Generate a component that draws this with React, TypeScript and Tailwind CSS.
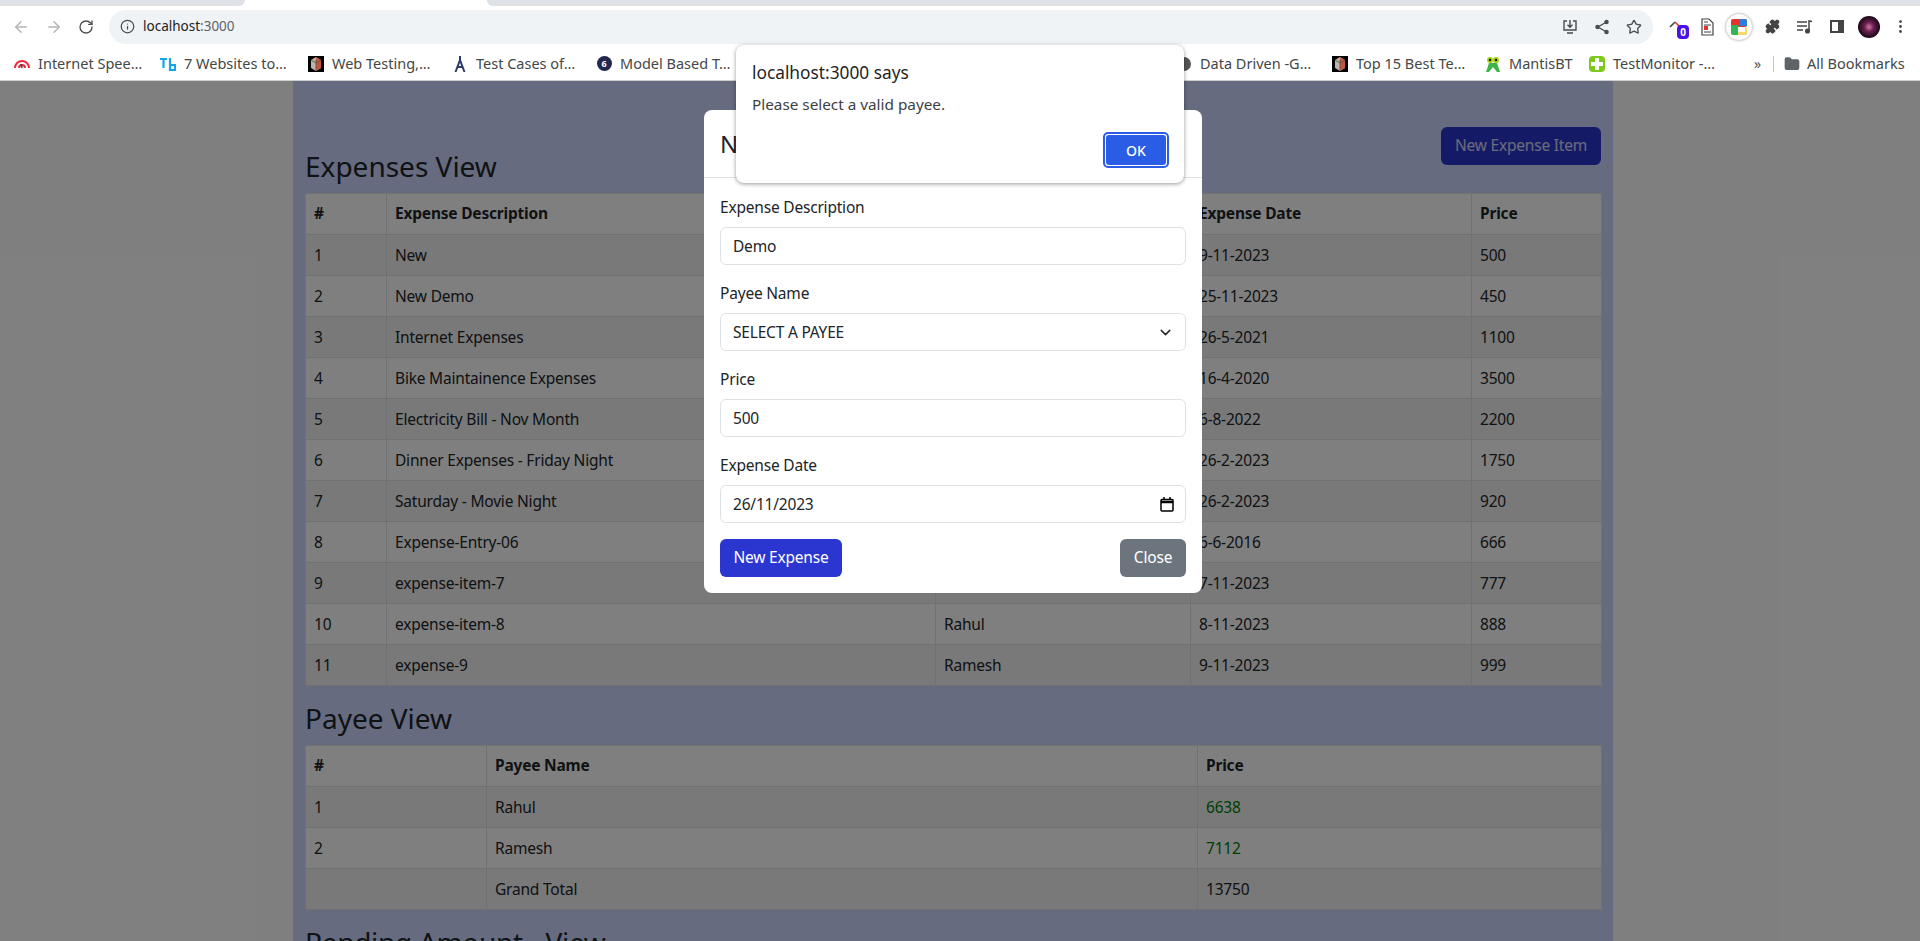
import React from 'react';
import { ArrowLeft, ArrowRight, RotateCw, Info, Star, Puzzle, MoreVertical, Folder, ChevronDown, X } from 'lucide-react';

const expenses = [
  ['1', 'New', '', '9-11-2023', '500'],
  ['2', 'New Demo', '', '25-11-2023', '450'],
  ['3', 'Internet Expenses', '', '26-5-2021', '1100'],
  ['4', 'Bike Maintainence Expenses', '', '16-4-2020', '3500'],
  ['5', 'Electricity Bill - Nov Month', '', '6-8-2022', '2200'],
  ['6', 'Dinner Expenses - Friday Night', '', '26-2-2023', '1750'],
  ['7', 'Saturday - Movie Night', '', '26-2-2023', '920'],
  ['8', 'Expense-Entry-06', '', '6-6-2016', '666'],
  ['9', 'expense-item-7', '', '7-11-2023', '777'],
  ['10', 'expense-item-8', 'Rahul', '8-11-2023', '888'],
  ['11', 'expense-9', 'Ramesh', '9-11-2023', '999'],
];

const cell = 'border border-[#dee2e6] px-2 h-[41px] text-left align-middle';
const bodyCell = `${cell} pt-[2px]`;

function Bookmark({ icon, label, width }: { icon: React.ReactNode; label: string; width: string }) {
  return (
    <div className={`flex items-center gap-2 shrink-0 ${width}`}>
      <span className="w-4 h-4 flex items-center justify-center shrink-0">{icon}</span>
      <span className="text-[14.5px] text-[#444746] whitespace-nowrap">{label}</span>
    </div>
  );
}

function Field({ label, children }: { label: string; children: React.ReactNode }) {
  return (
    <div className="mb-4">
      <div className="h-[24px] leading-[24px] mb-2 text-[#212529]">{label}</div>
      {children}
    </div>
  );
}

const inputBox = 'h-[38px] border border-[#dee2e6] rounded-md flex items-center justify-between px-3 pt-px text-[#212529]';

const gridIcon = (
  <svg width="16" height="16" viewBox="0 0 16 16">
    <rect width="16" height="16" fill="#000" />
    <path d="M3 4l5-3 5 3v8l-5 3-5-3z" fill="#b9b4ad" />
    <path d="M8 1l5 3v8l-5 3z" fill="#c4553e" />
    <path d="M8 4v11M3 4l5 3 5-3" stroke="#5b4a40" strokeWidth="0.8" fill="none" />
  </svg>
);

export default function App() {
  return (
    <div className="relative h-[941px] w-[1920px] overflow-hidden bg-white font-['Noto_Sans',sans-serif]">
      {/* browser chrome */}
      <div className="h-[6px] flex bg-white">
        <div className="w-[245px] rounded-br-lg bg-[#dee1e6]" />
        <div className="w-[242px]" />
        <div className="flex-1 rounded-bl-lg bg-[#dee1e6]" />
      </div>
      <div className="h-[41px] flex items-center pl-[12px] bg-white">
        <ArrowLeft size={18} className="text-[#b4b6b8]" />
        <ArrowRight size={18} className="text-[#b4b6b8] ml-[15px]" />
        <RotateCw size={16} className="text-[#4a4c4e] ml-[15px]" />
        <div className="ml-[15px] w-[1544px] h-[34px] rounded-full bg-[#eff3f5] flex items-center pl-[11px] pr-[11px]">
          <Info size={15} className="text-[#4a4c4e]" />
          <span className="ml-[8px] text-[13.5px] text-[#202124]">localhost<span className="text-[#5f6368]">:3000</span></span>
          <div className="ml-auto flex items-center gap-[16px] text-[#4a4c4e]">
            <svg width="16" height="16" viewBox="0 0 16 16" fill="none" stroke="currentColor" strokeWidth="1.4">
              <path d="M5 2H2v9h12V2h-3M8 1v7M5.5 5.8L8 8.3l2.5-2.5M5 14h6" />
            </svg>
            <svg width="16" height="16" viewBox="0 0 16 16" fill="currentColor" stroke="currentColor" strokeWidth="1.3">
              <path d="M12.5 3L4 8l8.5 5" fill="none" />
              <circle cx="12.5" cy="3" r="1.6" />
              <circle cx="3.5" cy="8" r="1.6" />
              <circle cx="12.5" cy="13" r="1.6" />
            </svg>
            <Star size={16} />
          </div>
        </div>
        <div className="relative ml-[16px] w-[12px] h-[24px]">
          <svg width="12" height="10" viewBox="0 0 12 10" fill="none" strokeWidth="1.6" className="absolute left-0 top-[4px]">
            <path d="M1 8l5-5" stroke="#444" />
            <path d="M6 3l4 4" stroke="#d33" />
          </svg>
          <span className="absolute left-[8px] top-[10px] w-[12px] h-[14px] rounded-sm bg-[#4a12e8] text-white text-[10px] font-bold leading-[14px] text-center">0</span>
        </div>
        <svg width="13" height="18" viewBox="0 0 13 18" fill="none" stroke="#444" strokeWidth="1.2" className="ml-[20px]">
          <path d="M1 1h7l4 4v12H1z" />
          <path d="M3 4h4M3 7h7M3 14h7" />
          <rect x="3" y="8" width="4" height="4" fill="#d33" stroke="none" />
        </svg>
        <span className="ml-[12px] w-[26px] h-[26px] rounded-full bg-white shadow-[0_0_3px_rgba(0,0,0,0.45)] flex items-center justify-center">
          <svg width="16" height="16" viewBox="0 0 16 16">
            <rect width="16" height="8" rx="2" fill="#e8322d" />
            <path d="M9 0h5a2 2 0 0 1 2 2v5H9z" fill="#2a7de1" />
            <rect y="6" width="8" height="10" rx="2" fill="#2fb457" />
            <rect x="7" y="8" width="9" height="8" rx="1" fill="#f6d86c" />
            <rect x="7" y="8" width="7" height="5" fill="#fff" />
          </svg>
        </span>
        <Puzzle size={15} fill="#444" className="text-[#444] ml-[13px]" />
        <svg width="16" height="14" viewBox="0 0 16 14" fill="none" stroke="#444" strokeWidth="1.5" className="ml-[17px]">
          <path d="M0 2h10M0 6h10M0 10h6M12 11V1l3 .5" />
          <circle cx="10.5" cy="11" r="1.8" fill="#444" />
        </svg>
        <span className="ml-[17px] w-[14px] h-[13px] border-[2px] border-r-[6px] border-[#444]" />
        <span className="ml-[14px] w-[22px] h-[22px] rounded-full bg-[radial-gradient(circle,#d07aa0_0%,#6a2050_30%,#1a0614_70%)]" />
        <MoreVertical size={17} className="text-[#444] ml-[12px]" />
      </div>
      <div className="h-[34px] flex items-center pl-[14px] border-b border-[#cfcfcf] bg-white">
        <Bookmark
          width="w-[146px]"
          label="Internet Spee…"
          icon={
            <svg width="16" height="16" viewBox="0 0 16 16" fill="none" stroke="#ee2a3c" strokeWidth="2">
              <path d="M1 12a7 7 0 0 1 14 0M5 12a3 3 0 0 1 6 0" />
              <path d="M8 12l-1-4" stroke="#444" strokeWidth="1.5" />
            </svg>
          }
        />
        <Bookmark
          width="w-[148px]"
          label="7 Websites to…"
          icon={
            <svg width="16" height="16" viewBox="0 0 16 16" fill="none" stroke="#12a5e8" strokeWidth="2.2">
              <path d="M0 3h7M3.5 3v9M10 2v12h5V9h-5" />
            </svg>
          }
        />
        <Bookmark width="w-[144px]" label="Web Testing,…" icon={gridIcon} />
        <Bookmark
          width="w-[144px]"
          label="Test Cases of…"
          icon={
            <svg width="16" height="16" viewBox="0 0 16 16" fill="none" stroke="#2b3a67" strokeWidth="2">
              <path d="M8 0v5M3.5 16L8 4l4.5 12M5 11h6" />
            </svg>
          }
        />
        <Bookmark
          width="w-[580px]"
          label="Model Based T…"
          icon={
            <span className="w-[15px] h-[15px] rounded-full bg-[#23274d] text-white text-[9px] leading-[15px] text-center font-bold">6</span>
          }
        />
        <Bookmark
          width="w-[156px]"
          label="Data Driven -G…"
          icon={<span className="w-[14px] h-[14px] rounded-full bg-[#555]" />}
        />
        <Bookmark width="w-[153px]" label="Top 15 Best Te…" icon={gridIcon} />
        <Bookmark
          width="w-[104px]"
          label="MantisBT"
          icon={
            <svg width="16" height="16" viewBox="0 0 16 16">
              <path d="M1 16L4 7h8l3 9h-3L8 11l-4 5z" fill="#3bb54a" />
              <circle cx="5" cy="4" r="3" fill="#a6d608" />
              <circle cx="11" cy="4" r="3" fill="#a6d608" />
              <circle cx="5" cy="4" r="1.2" fill="#111" />
              <circle cx="11" cy="4" r="1.2" fill="#111" />
            </svg>
          }
        />
        <Bookmark
          width="w-[165px]"
          label="TestMonitor -…"
          icon={
            <span className="relative w-[16px] h-[16px] rounded-sm bg-[#7ccb1a]">
              <span className="absolute left-[6px] top-[2px] w-[4px] h-[12px] bg-white" />
              <span className="absolute left-[2px] top-[6px] w-[12px] h-[4px] bg-white" />
            </span>
          }
        />
        <span className="text-[14px] text-[#555] w-[19px]">»</span>
        <span className="w-px h-[16px] bg-[#c4c7c5] mr-[10px]" />
        <Folder size={16} fill="#5f6368" className="text-[#5f6368]" />
        <span className="ml-[7px] text-[14.5px] text-[#444746] whitespace-nowrap">All Bookmarks</span>
      </div>

      {/* page */}
      <div className="relative h-[860px] bg-white overflow-hidden text-[15.5px] tracking-[-0.2px]">
        <div className="w-[1906px]">
          <div className="mx-auto w-[1320px] h-[860px] px-3 bg-[#ccd6ff] text-[#212529]">
            <div className="flex justify-between items-end h-[104px] mb-2">
              <h2 className="text-[28px] leading-[33px] tracking-normal mb-[2px]">Expenses View</h2>
              <button className="h-[38px] w-[160px] mb-5 rounded-md bg-[#2b35cf] text-white/80">New Expense Item</button>
            </div>
            <table className="w-[1296px] table-fixed border-collapse bg-white">
              <colgroup>
                <col className="w-[81px]" />
                <col className="w-[549px]" />
                <col className="w-[255px]" />
                <col className="w-[281px]" />
                <col className="w-[130px]" />
              </colgroup>
              <thead>
                <tr className="font-bold">
                  <th className={cell}>#</th>
                  <th className={cell}>Expense Description</th>
                  <th className={cell}>Payee Name</th>
                  <th className={cell}>Expense Date</th>
                  <th className={cell}>Price</th>
                </tr>
              </thead>
              <tbody>
                {expenses.map((r, i) => (
                  <tr key={r[0]} className={i % 2 === 0 ? 'bg-[#f2f2f2]' : 'bg-white'}>
                    {r.map((c, j) => (
                      <td key={j} className={bodyCell}>{c}</td>
                    ))}
                  </tr>
                ))}
              </tbody>
            </table>
            <h2 className="mt-4 mb-[10px] text-[28px] leading-[33px] tracking-normal">Payee View</h2>
            <table className="w-[1296px] table-fixed border-collapse bg-white">
              <colgroup>
                <col className="w-[181px]" />
                <col className="w-[711px]" />
                <col className="w-[404px]" />
              </colgroup>
              <thead>
                <tr className="font-bold">
                  <th className={cell}>#</th>
                  <th className={cell}>Payee Name</th>
                  <th className={cell}>Price</th>
                </tr>
              </thead>
              <tbody>
                <tr className="bg-[#f2f2f2]">
                  <td className={bodyCell}>1</td>
                  <td className={bodyCell}>Rahul</td>
                  <td className={`${bodyCell} text-[#008000]`}>6638</td>
                </tr>
                <tr className="bg-white">
                  <td className={bodyCell}>2</td>
                  <td className={bodyCell}>Ramesh</td>
                  <td className={`${bodyCell} text-[#008000]`}>7112</td>
                </tr>
                <tr className="bg-[#f2f2f2]">
                  <td className={bodyCell}></td>
                  <td className={bodyCell}>Grand Total</td>
                  <td className={bodyCell}>13750</td>
                </tr>
              </tbody>
            </table>
            <h2 className="mt-4 text-[28px] leading-[33px] tracking-[-0.3px]">Pending Amount - View</h2>
          </div>
        </div>

        {/* backdrop + modal */}
        <div className="absolute inset-0 bg-black/50" />
        <div className="absolute left-[704px] top-[29px] w-[498px] h-[483px] rounded-lg bg-white">
          <div className="h-[68px] border-b border-[#dee2e6] flex items-center justify-between px-4 text-[24px] tracking-normal text-[#212529]">
            New Expense
            <X size={16} className="text-[#777]" />
          </div>
          <div className="pt-[17px] px-4">
            <Field label="Expense Description">
              <div className={inputBox}>Demo</div>
            </Field>
            <Field label="Payee Name">
              <div className={inputBox}>SELECT A PAYEE<ChevronDown size={17} className="-mr-[1px]" /></div>
            </Field>
            <Field label="Price">
              <div className={inputBox}>500</div>
            </Field>
            <Field label="Expense Date">
              <div className={inputBox}>
                26/11/2023
                <svg width="14" height="15" viewBox="0 0 14 15" fill="none" stroke="#000" strokeWidth="1.5" className="-mr-[1px]">
                  <rect x="1" y="2.5" width="12" height="11.5" rx="1" />
                  <path d="M1 5h12" strokeWidth="2.5" />
                  <path d="M4 0v3M10 0v3" />
                </svg>
              </div>
            </Field>
            <div className="flex justify-between">
              <button className="h-[38px] w-[122px] rounded-md bg-[#2b35cf] text-white">New Expense</button>
              <button className="h-[38px] w-[66px] rounded-md bg-[#6c757d] text-white">Close</button>
            </div>
          </div>
        </div>
      </div>

      {/* alert */}
      <div className="absolute left-[736px] top-[45px] w-[448px] h-[138px] rounded-lg bg-white shadow-[0_1px_4px_rgba(0,0,0,0.4)] px-4 pt-4">
        <div className="text-[17.3px] leading-[24px] text-[#1f1f1f]">localhost:3000 says</div>
        <div className="mt-[9px] text-[15.3px] leading-[20px] text-[#3c4043]">Please select a valid payee.</div>
        <div className="absolute right-[15px] bottom-[15px] w-[66px] h-[36px] rounded-[5px] border-[2px] border-[#2b5ce6] p-px">
          <div className="w-full h-full rounded-[3px] bg-[#2b5ce6] text-white text-[14px] font-medium flex items-center justify-center">OK</div>
        </div>
      </div>
    </div>
  );
}
